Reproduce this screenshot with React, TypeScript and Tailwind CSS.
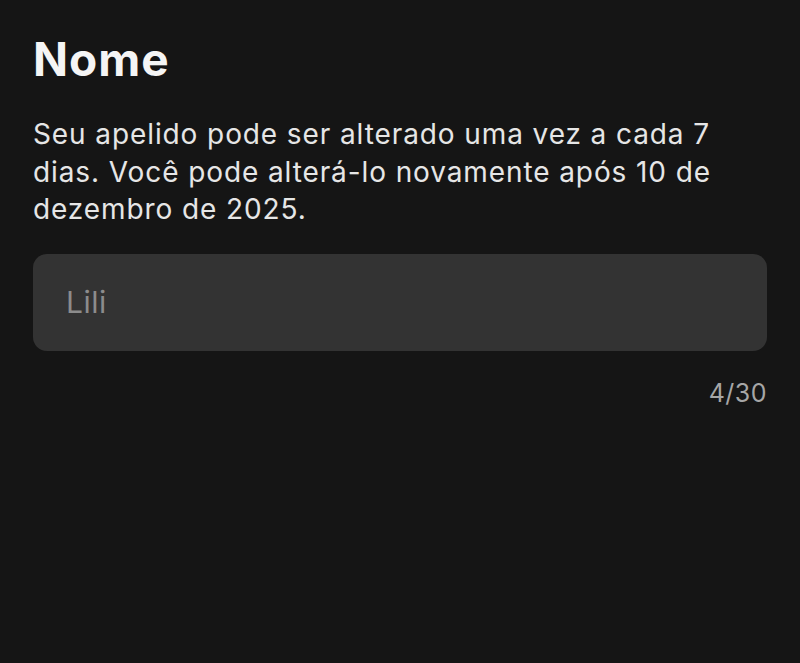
export default function App() {
  return (
    <div className="w-[800px] h-[663px] bg-[#151515] px-[33px] pt-[33px] font-['Inter',sans-serif]">
      <h1 className="text-[46px] leading-[53px] font-bold text-[#f5f5f5] tracking-[1px]">Nome</h1>
      <p className="mt-[30px] text-[28px] leading-[37.5px] tracking-[0.9px] text-[#e6e6e6]">
        Seu apelido pode ser alterado uma vez a cada 7 dias. Você pode alterá-lo novamente após 10 de dezembro de 2025.
      </p>
      <div className="mt-[25.5px] h-[97px] rounded-[14px] bg-[#333333] flex items-center px-[33px]">
        <span className="text-[30px] tracking-[0.5px] text-[#8c8c8c]">Lili</span>
      </div>
      <div className="mt-[25px] text-right text-[25px] leading-[34px] tracking-[0.5px] text-[#a6a6a6]">4/30</div>
    </div>
  );
}
